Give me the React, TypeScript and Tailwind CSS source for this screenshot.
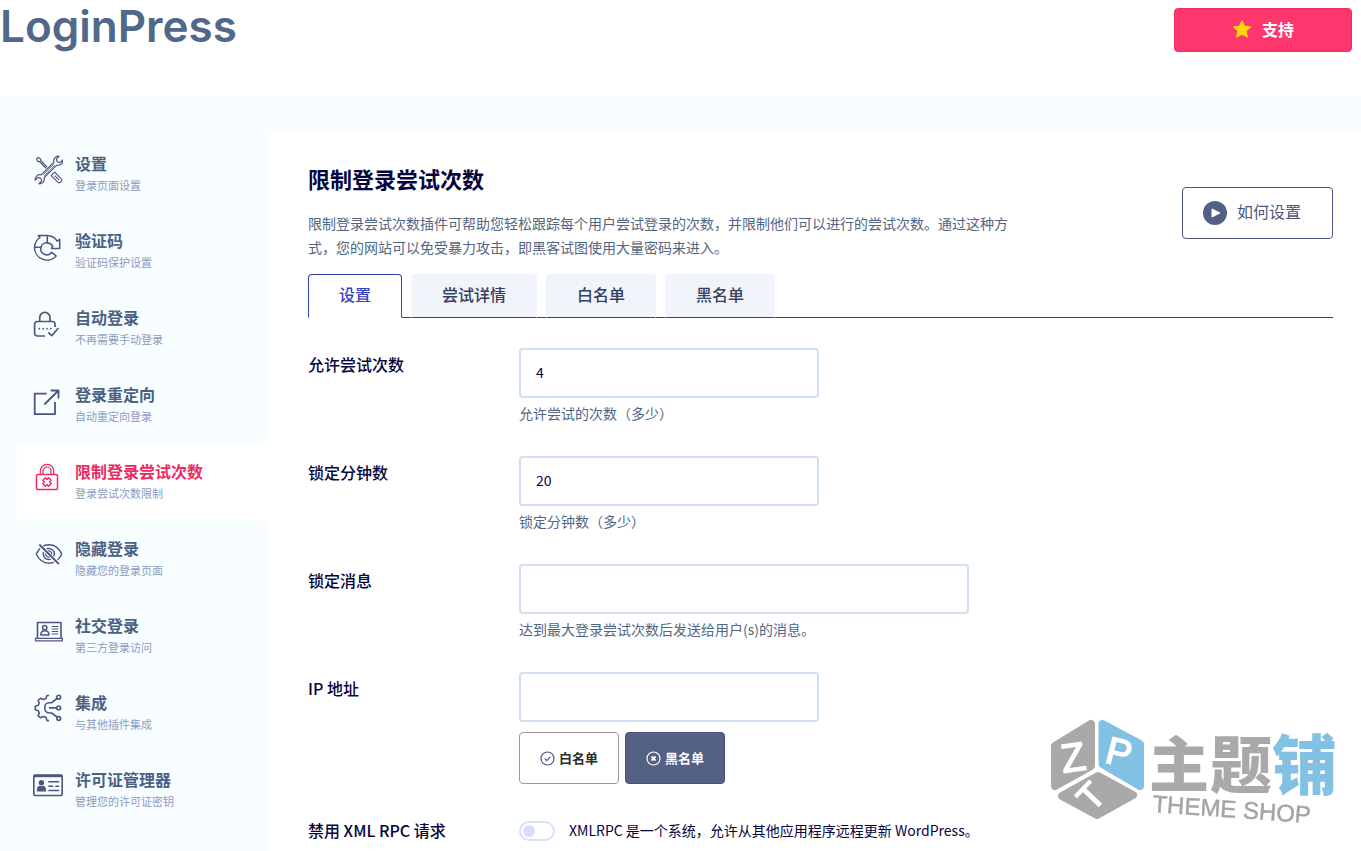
import type { ReactNode } from "react";

type NavItem = {
  title: string;
  subtitle: string;
  icon: ReactNode;
  active?: boolean;
};

const navItems: NavItem[] = [
  {
    title: "设置",
    subtitle: "登录页面设置",
    icon: (
      <>
        <g transform="translate(16 15) rotate(-45)">
          <path d="M-1.3-16.5h2.6l.5 2.4-1 1.8v9M-1.3-16.5l-.5 2.4 1 1.8v9M-2.4 5.5h4.8v9a2.4 2.4 0 0 1-4.8 0zM0 8v6" />
        </g>
        <g transform="translate(16 15) rotate(45)">
          <path
            fill="#f8feff"
            d="M-2-9V9a4.6 4.6 0 0 0-.6 7.800v-3.8L0 11.6l2.6 1.4v3.8A4.6 4.6 0 0 0 2 9V-9a4.6 4.6 0 0 0 .6-7.800v3.8L0-11.600l-2.6-1.4v-3.800A4.6 4.6 0 0 0-2-9z"
          />
          <path d="M-.7-7.5v15M.7-7.5v15" strokeWidth="0.7" />
        </g>
      </>
    ),
  },
  {
    title: "验证码",
    subtitle: "验证码保护设置",
    icon: (
      <g strokeWidth="1.5">
        <path d="M1.5 15.3A12.5 12.5 0 0 1 7 5.5l-1.7-2h9v7.4A5.6 5.6 0 0 0 8 15.3z" />
        <path d="M14.3 3.5a12 12 0 0 1 9.900 5.700l2.5-1.800v9h-8.200l1.3-2.300a6 6 0 0 0-5.500-3.200" />
        <path d="M1.5 15.3A12.5 12.5 0 0 0 23.2 24l-4.5-3.700A6 6 0 0 1 8 15.3" />
      </g>
    ),
  },
  {
    title: "自动登录",
    subtitle: "不再需要手动登录",
    icon: (
      <>
        <path
          strokeWidth="1.7"
          d="M6.7 12.5v-4a5.1 5.1 0 0 1 10.300 0v4M12 27H4.300a2.7 2.7 0 0 1-2.700-2.700v-9.200a2.6 2.6 0 0 1 2.700-2.600h15a2.6 2.6 0 0 1 2.700 2.600V18M15.300 23.300l3.400 3.400 6.700-7.700"
        />
        <path
          strokeWidth="1.8"
          strokeLinecap="round"
          d="M6.3 19.7h.01M10.2 19.7h.01M14 19.7h.01M17.7 19.7h.01"
        />
      </>
    ),
  },
  {
    title: "登录重定向",
    subtitle: "自动重定向登录",
    icon: (
      <path
        strokeWidth="1.8"
        d="M13.700 7.700h-12v20.500H22V16M11.300 18.500l14.200-14M17.700 4.500h7.800v8"
      />
    ),
  },
  {
    title: "限制登录尝试次数",
    subtitle: "登录尝试次数限制",
    active: true,
    icon: (
      <>
        <rect x="3.5" y="11.5" width="21" height="15" rx="1" strokeWidth="1.5" />
        <path d="M7.300 11.500V8a6.700 6.700 0 0 1 13.400 0v3.500M10 11.500V8a4 4 0 0 1 8 0v3.500" />
        <path
          strokeWidth="1.4"
          d="M14 16.500l1.500-1.700 2.700 2.500-1.500 1.700 1.500 1.700-2.700 2.500-1.500-1.700-1.500 1.700-2.700-2.500 1.500-1.700-1.500-1.700 2.700-2.500z"
        />
      </>
    ),
  },
  {
    title: "隐藏登录",
    subtitle: "隐藏您的登录页面",
    icon: (
      <>
        <path strokeWidth="1.5" d="M3.200 14C9 1.800 23 1.800 28.800 14M3.200 14C9 26.200 23 26.200 28.800 14" />
        <circle cx="15.8" cy="14" r="5.5" strokeWidth="1.4" />
        <path stroke="#f8feff" strokeWidth="4" d="M8 6.500l16 16" />
        <path d="M12.700 13.500a3.200 3.200 0 0 0 3.600 3.600M18.700 14.500a3.200 3.200 0 0 0-3.500-3.600" />
        <path d="M6.300 4.500l19.500 19.500" strokeWidth="1.8" />
      </>
    ),
  },
  {
    title: "社交登录",
    subtitle: "第三方登录访问",
    icon: (
      <>
        <path strokeWidth="1.6" d="M4.500 21V5.500h23.500V21" />
        <path d="M2.500 21.300h27v2.500h-27z" />
        <circle cx="11.7" cy="10.8" r="2.2" strokeWidth="1.5" />
        <path
          strokeWidth="1.5"
          d="M7.800 18c0-3 1-4.200 3.900-4.200S16 15 16 18z"
        />
        <path d="M18.700 9.500h6.500M18.700 12h6.500M18.700 14.500h6.500M18.700 17h6.500" />
      </>
    ),
  },
  {
    title: "集成",
    subtitle: "与其他插件集成",
    icon: (
      <g strokeWidth="1.6">
        <path d="M16 1.500h-2l-1 3-2.500 1-3-1.200L5 6.500 6.300 9l-1 2.200-3 1v3.500l3 1 1 2.400L5 21.600l2.500 2.200 3-1.200 2.500 1 1 3h2" />
        <path d="M24 4.500l-5.300 4.200H16c-5.700 0-5.700 10.300 0 10.300h2.700l5.300 4M16 13.900h7.500" />
        <circle cx="25.7" cy="3.2" r="1.9" />
        <circle cx="25.7" cy="13.9" r="1.9" />
        <circle cx="25.7" cy="24.5" r="1.9" />
      </g>
    ),
  },
  {
    title: "许可证管理器",
    subtitle: "管理您的许可证密钥",
    icon: (
      <>
        <rect x="0.8" y="4" width="28.4" height="20.5" rx="1.2" strokeWidth="1.6" />
        <path d="M1 5h28" strokeWidth="2.4" />
        <circle cx="8.4" cy="11.8" r="2.7" fill="currentColor" stroke="none" />
        <path
          fill="currentColor"
          stroke="none"
          d="M3.800 20.500c0-4 .9-5.500 2.700-5.800l1.900.6 1.900-.6c1.800.3 2.700 1.800 2.700 5.800z"
        />
        <path d="M15.300 10.800h10.900M15.300 15.200h5M22.300 15.200h3.900M15.300 19.600h10.900" strokeWidth="1.5" />
      </>
    ),
  },
];

const tabs = ["设置", "尝试详情", "白名单", "黑名单"];

const NavLink = ({ item }: { item: NavItem }) => (
  <a
    href="#"
    className={`ml-[17px] flex gap-3 rounded-l pt-4 pb-[17px] pl-4 ${
      item.active ? "bg-white text-[#ea2c62]" : "text-[#4b6182]"
    }`}
  >
    <svg
      viewBox="0 0 30 30"
      className={`mt-1 size-[30px] shrink-0 ${item.active ? "" : "text-[#4d5680]"}`}
      fill="none"
      stroke="currentColor"
      strokeWidth="1.2"
      strokeLinejoin="round"
      aria-hidden="true"
    >
      {item.icon}
    </svg>
    <span>
      <span className="block text-base leading-6 font-bold">{item.title}</span>
      <span className="block text-[11px] leading-5 text-[#8c9bc0]">{item.subtitle}</span>
    </span>
  </a>
);

type FieldProps = {
  id: string;
  label: string;
  value?: string;
  help?: string;
  wide?: boolean;
  children?: ReactNode;
};

const Field = ({ id, label, value = "", help, wide, children }: FieldProps) => (
  <div className="grid grid-cols-[211px_1fr]">
    <label htmlFor={id} className="text-base leading-8 font-medium text-[#05053d]">
      {label}
    </label>
    <div>
      <input
        id={id}
        type="text"
        defaultValue={value}
        className={`block h-[50px] max-w-full rounded border-2 border-[#d1dff3] bg-white px-[15px] pb-0.5 text-sm text-[#05053d] ${
          wide ? "w-[450px]" : "w-[300px]"
        }`}
      />
      {help && <p className="mt-[3px] mb-px text-sm leading-6 text-[#516683]">{help}</p>}
      {children}
    </div>
  </div>
);

const Watermark = () => (
  <svg
    viewBox="0 -20 290 140"
    className="pointer-events-none fixed right-[23px] bottom-[13px] w-[290px]"
    role="img"
    aria-label="主题铺 THEME SHOP"
  >
    <g strokeWidth="8" strokeLinejoin="round">
      <path fill="#a9a9a9" stroke="#a9a9a9" d="M7 28 43 6v42L7 68z" />
      <path fill="#82c1e4" stroke="#82c1e4" d="M54.500 6 92 26v42L54.500 46z" />
      <path fill="#a9a9a9" stroke="#a9a9a9" d="M50 58 85 77 49 97 14 78z" />
    </g>
    <g
      className="font-[Liberation_Sans]"
      fill="#fff"
      stroke="#fff"
      strokeWidth="1.5"
      textAnchor="middle"
    >
      <text fontSize="40" transform="translate(27 53) rotate(-8)">Z</text>
      <text fontSize="38" transform="translate(68 47) rotate(14)">P</text>
      <text fontSize="36" transform="translate(52 87) rotate(-46)">T</text>
    </g>
    <g className="font-[Noto_Sans_CJK_SC] font-black">
      <text x="101" y="69" fontSize="60" fill="#a9a9a9">主</text>
      <text x="162" y="70" fontSize="62" fill="#a9a9a9">题</text>
      <text x="224" y="71" fontSize="65" fill="#82c1e4">铺</text>
    </g>
    <text
      className="font-[Liberation_Sans]"
      fontSize="24"
      fill="#a5a5a5"
      stroke="#a5a5a5"
      strokeWidth="0.5"
      transform="translate(104 94) rotate(4)"
    >
      THEME SHOP
    </text>
  </svg>
);

const App = () => {
  return (
    <div className="min-h-screen bg-white font-['Noto_Sans_CJK_SC',sans-serif]">
      <header className="flex h-24 items-start justify-between pr-[9px]">
        <a
          href="#"
          className="font-[Inter] text-[44px] leading-[52px] font-semibold text-[#516888]"
        >
          LoginPress
        </a>
        <button
          type="button"
          className="mt-2 flex h-11 w-[178px] items-center justify-center gap-2.5 rounded border border-[#f02f65] bg-[#fd376e] pb-0.5 text-base font-bold text-white"
        >
          <svg viewBox="0 0 20 20" className="size-5" fill="#ffd60a" aria-hidden="true">
            <path
              d="M10 1.500l2.600 5.700 6.200.7-4.600 4.200 1.300 6.200L10 15.200l-5.500 3.100 1.300-6.200L1.200 7.900l6.200-.7z"
              stroke="#ffd60a"
              strokeLinejoin="round"
            />
          </svg>
          支持
        </button>
      </header>

      <div className="flex bg-[#f8feff] pt-[37px]">
        <nav className="w-[268px] shrink-0 pt-0.5">
          {navItems.map((item) => (
            <NavLink key={item.title} item={item} />
          ))}
        </nav>

        <main className="min-w-0 flex-1 rounded-tl bg-white pt-[29px] pr-7 pb-2.5 pl-10">
          <div className="flex items-start justify-between gap-10">
            <div className="max-w-[704px]">
              <h1 className="text-[22px] leading-8 font-bold text-[#05053d]">限制登录尝试次数</h1>
              <p className="mt-[17px] text-sm leading-6 text-[#516683]">
                限制登录尝试次数插件可帮助您轻松跟踪每个用户尝试登录的次数，并限制他们可以进行的尝试次数。通过这种方式，您的网站可以免受暴力攻击，即黑客试图使用大量密码来进入。
              </p>
            </div>
            <button
              type="button"
              className="mt-[25px] flex h-[52px] w-[151px] shrink-0 items-center gap-2.5 rounded border border-[#4d5680] pl-5 text-base text-[#4d5680]"
            >
              <svg viewBox="0 0 24 24" className="size-6" aria-hidden="true">
                <circle cx="12" cy="12" r="12" fill="#516083" />
                <path d="M9 8v8l8-4z" fill="#fff" stroke="#fff" strokeLinejoin="round" />
              </svg>
              <span className="pb-1">如何设置</span>
            </button>
          </div>

          <div role="tablist" className="mt-[15px] flex gap-[9px] border-b border-[#34418f]">
            {tabs.map((tab, index) => (
              <button
                key={tab}
                type="button"
                role="tab"
                aria-selected={index === 0}
                className={`-mb-px h-11 rounded-t border px-[30px] pb-1 text-base font-medium ${
                  index === 0
                    ? "border-[#3341ae] border-b-white bg-white text-[#3443b8]"
                    : "border-[#f1f4fb] border-b-[#34418f] bg-[#f1f4fb] text-[#33405f]"
                }`}
              >
                {tab}
              </button>
            ))}
          </div>

          <form className="mt-[30px] flex flex-col gap-[30px]">
            <Field id="attempts" label="允许尝试次数" value="4" help="允许尝试的次数（多少）" />
            <Field id="minutes" label="锁定分钟数" value="20" help="锁定分钟数（多少）" />
            <Field id="message" label="锁定消息" help="达到最大登录尝试次数后发送给用户(s)的消息。" wide />
            <Field id="ip" label="IP 地址">
              <div className="mt-2.5 flex gap-1.5">
                <button
                  type="button"
                  className="flex h-[52px] w-[100px] items-center justify-center gap-1 rounded border border-[#9a9a9a] bg-white text-[13px] font-bold text-[#2c2c2c]"
                >
                  <svg viewBox="0 0 15 15" className="size-[15px]" fill="none" stroke="#4d5680" strokeWidth="1.2" aria-hidden="true">
                    <circle cx="7.5" cy="7.5" r="6.5" />
                    <path d="M4.800 7.600l2 2 3.600-3.800" />
                  </svg>
                  白名单
                </button>
                <button
                  type="button"
                  className="flex h-[52px] w-[100px] items-center justify-center gap-1 rounded border border-[#48527a] bg-[#556085] text-[13px] font-bold text-white"
                >
                  <svg viewBox="0 0 15 15" className="size-[15px]" fill="none" stroke="#fff" strokeWidth="1.2" aria-hidden="true">
                    <circle cx="7.5" cy="7.5" r="6.5" />
                    <path d="M5.500 5.500l4 4M9.500 5.500l-4 4" strokeWidth="1.8" />
                  </svg>
                  黑名单
                </button>
              </div>
            </Field>
            <div className="grid grid-cols-[211px_1fr] text-[#05053d]">
              <label htmlFor="xmlrpc" className="text-base leading-8 font-medium">
                禁用 XML RPC 请求
              </label>
              <div className="flex h-[34px] items-center gap-3.5 text-sm">
                <input
                  id="xmlrpc"
                  type="checkbox"
                  className="flex h-5 w-9 appearance-none items-center rounded-full border-2 border-[#d8e2f6] bg-white pl-0.5 before:size-3 before:rounded-full before:bg-[#d5dff5] checked:justify-end"
                />
                <label htmlFor="xmlrpc" className="pb-0.5">
                  XMLRPC 是一个系统，允许从其他应用程序远程更新 WordPress。
                </label>
              </div>
            </div>
          </form>
        </main>
      </div>
      <Watermark />
    </div>
  );
};

export default App;
